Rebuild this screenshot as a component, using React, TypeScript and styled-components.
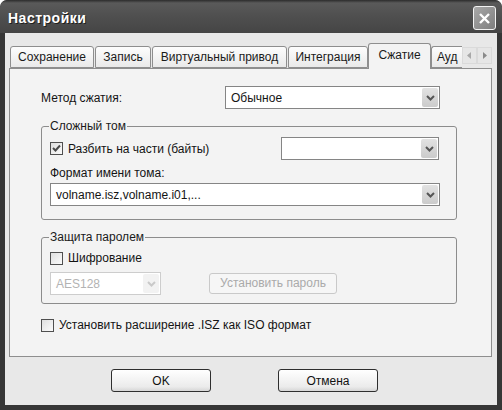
import React from "react"
import styled, { createGlobalStyle } from "styled-components"

const GlobalStyle = createGlobalStyle`
  html, body {
    margin: 0;
    padding: 0;
    background: #ffffff;
  }
  body {
    font-family: "Liberation Sans", Arial, sans-serif;
    font-size: 12px;
    color: #141414;
  }
`

const tabs = [
  { label: "Сохранение", w: 84 },
  { label: "Запись", w: 56 },
  { label: "Виртуальный привод", w: 135 },
  { label: "Интеграция", w: 80 },
  { label: "Сжатие", w: 63, active: true },
  { label: "Ауд", w: 31, clipped: true },
]

const Chevron = ({ disabled }: { disabled?: boolean }) => (
  <svg width="9" height="6" viewBox="0 0 9 6">
    <path
      d="M1 1 L4.5 4.5 L8 1"
      fill="none"
      stroke={disabled ? "#c9c9c9" : "#555"}
      strokeWidth="2"
    />
  </svg>
)

const Combo = ({ value, width, disabled }: { value?: string; width: number; disabled?: boolean }) => (
  <ComboBox $w={width} $disabled={disabled}>
    <ComboText>{value}</ComboText>
    <ComboArrow $disabled={disabled}>
      <Chevron disabled={disabled} />
    </ComboArrow>
  </ComboBox>
)

const Check = ({ checked }: { checked?: boolean }) => (
  <CheckBox>
    {checked && (
      <svg width="11" height="11" viewBox="0 0 11 11">
        <path d="M2 5 L4.5 7.5 L9 2.5" fill="none" stroke="#4a4a4a" strokeWidth="2" />
      </svg>
    )}
  </CheckBox>
)

const App = () => {
  return (
    <>
      <GlobalStyle />
      <Window>
        <TitleBar>
          <Title>Настройки</Title>
          <CloseButton>
            <svg width="13" height="13" viewBox="0 0 13 13">
              <path d="M2 2 L11 11 M11 2 L2 11" stroke="#fff" strokeWidth="2.4" />
            </svg>
          </CloseButton>
        </TitleBar>
        <Body>
          <TabStrip>
            {tabs.map((t) => (
              <Tab key={t.label} $w={t.w} $active={t.active} $clipped={t.clipped}>
                {t.label}
              </Tab>
            ))}
            <ScrollArrows>
              <ArrowBtn>
                <svg width="5" height="7" viewBox="0 0 5 7">
                  <path d="M4 0 L0 3.5 L4 7 Z" fill="#a8a8a8" />
                </svg>
              </ArrowBtn>
              <ArrowBtn>
                <svg width="5" height="7" viewBox="0 0 5 7">
                  <path d="M1 0 L5 3.5 L1 7 Z" fill="#8a8a8a" />
                </svg>
              </ArrowBtn>
            </ScrollArrows>
          </TabStrip>
          <Panel>
            <MethodRow>
              <MethodLabel>Метод сжатия:</MethodLabel>
              <Combo value="Обычное" width={215} />
            </MethodRow>

            <Group $mt={10} $pb={13}>
              <Legend>Сложный том</Legend>
              <SplitRow>
                <CheckLabel>
                  <Check checked />
                  Разбить на части (байты)
                </CheckLabel>
                <Combo width={158} />
              </SplitRow>
              <FieldLabel>Формат имени тома:</FieldLabel>
              <Combo value="volname.isz,volname.i01,..." width={390} />
            </Group>

            <Group $mt={10} $pb={8}>
              <Legend>Защита паролем</Legend>
              <CheckLabel $mt={7}>
                <Check />
                Шифрование
              </CheckLabel>
              <PasswordRow>
                <Combo value="AES128" width={111} disabled />
                <DisabledButton>Установить пароль</DisabledButton>
              </PasswordRow>
            </Group>

            <CheckLabel $mt={14}>
              <Check />
              Установить расширение .ISZ как ISO формат
            </CheckLabel>
          </Panel>
          <ButtonRow>
            <DialogButton>OK</DialogButton>
            <DialogButton>Отмена</DialogButton>
          </ButtonRow>
        </Body>
      </Window>
    </>
  )
}

const Window = styled.div`
  width: 502px;
  height: 410px;
  box-sizing: border-box;
  background: #363636;
  border-radius: 7px 7px 0 0;
  padding: 0 5px 5px 5px;
  display: flex;
  flex-direction: column;
  overflow: hidden;
`

const TitleBar = styled.div`
  height: 33px;
  margin: 0 -5px;
  padding: 0 6px 0 8px;
  display: flex;
  align-items: center;
  justify-content: space-between;
  background: linear-gradient(#2c2c2c 0, #5a5a5a 3px, #505050 45%, #454545 100%);
  border-radius: 7px 7px 0 0;
  flex-shrink: 0;
`

const Title = styled.div`
  color: #ffffff;
  font-weight: bold;
  font-size: 14px;
  letter-spacing: 0.5px;
  text-shadow: 1px 1px 0 #1e1e1e;
  margin-top: 2px;
`

const CloseButton = styled.div`
  width: 21px;
  height: 22px;
  margin-top: 3px;
  border: 1px solid #f2f2f2;
  border-radius: 3px;
  background: linear-gradient(135deg, #a8a8a8, #7e7e7e);
  display: flex;
  align-items: center;
  justify-content: center;
`

const Body = styled.div`
  flex: 1;
  background: #e8e8e8;
  padding: 10px 5px 0 4px;
  display: flex;
  flex-direction: column;
`

const TabStrip = styled.div`
  height: 25px;
  display: flex;
  align-items: flex-end;
  gap: 1px;
  padding-left: 1px;
  position: relative;
  z-index: 2;
`

const Tab = styled.div<{ $w: number; $active?: boolean; $clipped?: boolean }>`
  width: ${(p) => p.$w}px;
  height: ${(p) => (p.$active ? 26 : 22)}px;
  margin: ${(p) => (p.$active ? "0 -1px -1px -1px" : "0")};
  box-sizing: border-box;
  border: 1px solid #8e8e8e;
  border-right: ${(p) => (p.$clipped ? "none" : "1px solid #8e8e8e")};
  border-bottom: ${(p) => (p.$active ? "none" : "1px solid #8e8e8e")};
  border-radius: ${(p) => (p.$clipped ? "3px 0 0 0" : "3px 3px 0 0")};
  background: ${(p) =>
    p.$active ? "#f3f3f3" : "linear-gradient(#fdfdfd, #e9e9e9)"};
  display: flex;
  align-items: ${(p) => (p.$active ? "flex-start" : "center")};
  justify-content: ${(p) => (p.$clipped ? "flex-start" : "center")};
  padding-top: ${(p) => (p.$active ? "4px" : "0")};
  padding-left: ${(p) => (p.$clipped ? "5px" : "0")};
  white-space: nowrap;
  overflow: hidden;
  font-size: 12px;
  color: #1a1a1a;
`

const ScrollArrows = styled.div`
  display: flex;
  margin-bottom: 4px;
  margin-left: -1px;
`

const ArrowBtn = styled.div`
  width: 15px;
  height: 17px;
  box-sizing: border-box;
  background: #e6e6e6;
  border: 1px solid #dadada;
  display: flex;
  align-items: center;
  justify-content: center;
`

const Panel = styled.div`
  height: 289px;
  box-sizing: border-box;
  border: 1px solid #8e8e8e;
  background: #f3f3f3;
  padding: 17px 34px 0 31px;
  display: flex;
  flex-direction: column;
`

const MethodRow = styled.div`
  display: flex;
  align-items: center;
`

const MethodLabel = styled.div`
  width: 184px;
`

const ComboBox = styled.div<{ $w: number; $disabled?: boolean }>`
  width: ${(p) => p.$w}px;
  height: 23px;
  box-sizing: border-box;
  border: 1px solid ${(p) => (p.$disabled ? "#cdcdcd" : "#858585")};
  background: #ffffff;
  display: flex;
  align-items: center;
  padding: 1px;
  color: ${(p) => (p.$disabled ? "#b3b3b3" : "#141414")};
`

const ComboText = styled.div`
  flex: 1;
  padding-left: 4px;
  white-space: nowrap;
  overflow: hidden;
`

const ComboArrow = styled.div<{ $disabled?: boolean }>`
  width: 16px;
  height: 19px;
  border-radius: 2px;
  background: ${(p) => (p.$disabled ? "#f2f2f2" : "linear-gradient(#e2e2e2, #cbcbcb)")};
  display: flex;
  align-items: center;
  justify-content: center;
`

const Group = styled.fieldset<{ $mt: number; $pb: number }>`
  margin: ${(p) => p.$mt}px 0 0 0;
  padding: 0 17px ${(p) => p.$pb}px 8px;
  border: 1px solid #8c8c8c;
  border-radius: 3px;
  min-width: 0;
  display: flex;
  flex-direction: column;
`

const Legend = styled.legend`
  padding: 0 1px;
  margin-left: -1px;
  line-height: 14px;
  color: #1a1a1a;
`

const SplitRow = styled.div`
  margin-top: 4px;
  display: flex;
  align-items: center;
  justify-content: space-between;
`

const CheckLabel = styled.div<{ $mt?: number }>`
  display: flex;
  align-items: center;
  gap: 5px;
  height: 14px;
  margin-top: ${(p) => p.$mt ?? 0}px;
`

const CheckBox = styled.div`
  width: 13px;
  height: 13px;
  box-sizing: border-box;
  border: 1px solid #4f4f4f;
  background: linear-gradient(135deg, #dedede, #fbfbfb);
  display: flex;
  align-items: center;
  justify-content: center;
  flex-shrink: 0;
`

const FieldLabel = styled.div`
  margin-top: 6px;
  margin-bottom: 3px;
  line-height: 14px;
`

const PasswordRow = styled.div`
  margin-top: 7px;
  display: flex;
  align-items: center;
  gap: 48px;
`

const DisabledButton = styled.div`
  width: 128px;
  height: 21px;
  box-sizing: border-box;
  border: 1px solid #c9c9c9;
  border-radius: 3px;
  background: #f6f6f6;
  color: #aaaaaa;
  display: flex;
  align-items: center;
  justify-content: center;
  margin-top: -1px;
`

const ButtonRow = styled.div`
  margin-top: 12px;
  padding-left: 102px;
  display: flex;
  gap: 67px;
`

const DialogButton = styled.div`
  width: 100px;
  height: 23px;
  box-sizing: border-box;
  border: 1px solid #2e2e2e;
  border-radius: 3px;
  background: linear-gradient(#ffffff, #ebebeb 80%, #d6d6d6);
  display: flex;
  align-items: center;
  justify-content: center;
  color: #111;
`

export default App
